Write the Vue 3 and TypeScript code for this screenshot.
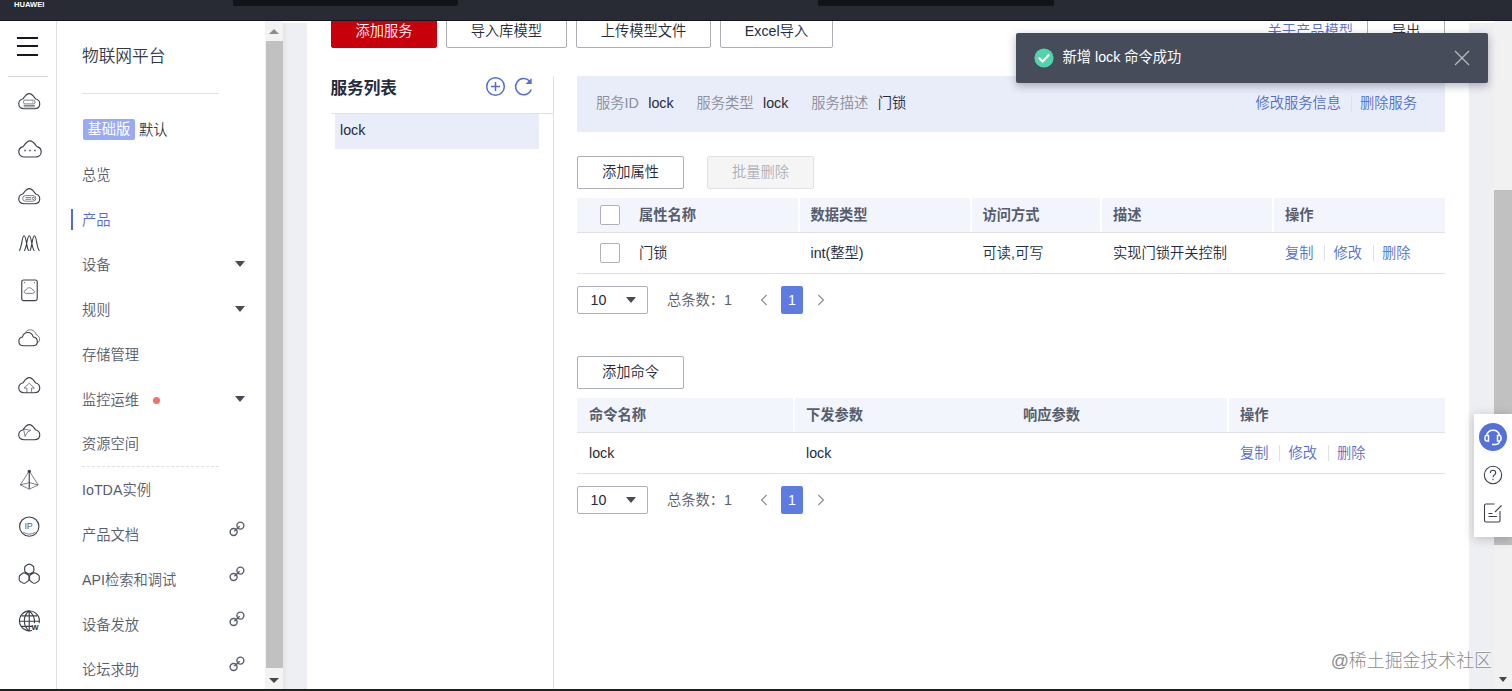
<script setup lang="ts">
interface MenuItem {
  label: string
  kind?: 'arrow' | 'link'
  active?: boolean
  dot?: boolean
}

const mainMenu: MenuItem[] = [
  { label: '总览' },
  { label: '产品', active: true },
  { label: '设备', kind: 'arrow' },
  { label: '规则', kind: 'arrow' },
  { label: '存储管理' },
  { label: '监控运维', kind: 'arrow', dot: true },
  { label: '资源空间' },
]
const extraMenu: MenuItem[] = [
  { label: 'IoTDA实例' },
  { label: '产品文档', kind: 'link' },
  { label: 'API检索和调试', kind: 'link' },
  { label: '设备发放', kind: 'link' },
  { label: '论坛求助', kind: 'link' },
]
const actions: string[] = ['复制', '修改', '删除']
const cloud = 'M6.500 20C3.200 20 .8 18 .8 15 .8 12.300 2.500 10.200 5 9.600 6.200 8.800 8.200 3.800 12 3.800s5.800 5 7 5.800C21.500 10.200 23.200 12.300 23.200 15 23.200 18 20.800 20 17.500 20Z'
</script>

<template>
  <div class="page">
    <header class="topbar">
      <span class="brand">HUAWEI</span>
      <i class="slot slot-a"></i>
      <i class="slot slot-b"></i>
    </header>

    <div class="body">
      <nav class="rail">
        <div class="burger"><i></i><i></i><i></i></div>
        <div class="rail-icons">
          <span><svg viewBox="0 0 24 24"><path :d="cloud" /><g class="thin"><rect x="6" y="10.800" width="12" height="4" rx="1.200" /><path d="M15 12.800h1.500M6 16.500h12M6 18h12" /></g></svg></span>
          <span><svg viewBox="0 0 24 24" class="big"><path :d="cloud" /><path class="dots" d="M6.300 13.500h1.400M11.300 13.500h1.400M16.300 13.500h1.400" /></svg></span>
          <span><svg viewBox="0 0 24 24"><path :d="cloud" /><g class="thin"><rect x="5" y="11.300" width="14" height="6" rx="3" /><path d="M8 13.400h6M8 15.300h6" /><circle cx="16.300" cy="14.300" r="1.200" /></g></svg></span>
          <span><svg viewBox="0 0 24 24"><path d="M1 20C4 19 4 4 6.500 4s2.500 14 5 16M6.500 20C9.500 18 9.500 4 12 4s2.500 14 5.500 16M12.500 20C15 18 15 4 17.500 4s2.500 15 5.500 16" /></svg></span>
          <span><svg viewBox="0 0 24 24"><rect x="4" y="1" width="16.500" height="22" rx="2" /><path class="thin" d="M9 15.300c-3.300 0-3-3.500-.4-3.500 1-3.300 6-3.300 7 0 2.600 0 2.900 3.500-.4 3.500Z" /><path d="M6.500 4h1M17 4h1" /></svg></span>
          <span><svg viewBox="0 0 24 24"><path d="M6 20c-6.500 0-6.500-8.500-1.300-9.300 1.800-6.500 9.800-6.500 11.600 0 5.800.8 5.800 9.300-.3 9.300Z" /><path class="thin" d="M8 5.500c3-4.500 10.500-2.500 11.500 2.800 4.500 1.700 4.700 6.700.9 9" /></svg></span>
          <span><svg viewBox="0 0 24 24"><path :d="cloud" /><path class="thin" d="M9.500 20v-5H6.500L12 9.800l5.500 5.200h-3v5" /></svg></span>
          <span><svg viewBox="0 0 24 24"><path :d="cloud" /><path class="thin" d="M6 8.500l7.500 1.500-3.500 2-2.500 4.500Z" /></svg></span>
          <span><svg viewBox="0 0 24 24"><path class="thin" d="M12 2L2.500 17l9.500 4.500 9.500-4.500ZM2.500 17l9.500-2.500 9.500 2.500" /><path d="M12 2v19" /><circle class="fill" cx="12" cy="2.500" r="1.200" /></svg></span>
          <span><svg viewBox="0 0 24 24"><circle cx="12" cy="11.300" r="10.300" /><text x="6.800" y="14.300" class="ip">IP</text><path class="thin" d="M5.500 17.300q6.500 4 13 0" /></svg></span>
          <span><svg viewBox="0 0 24 24"><path d="M10.500 1.600q1.500-.9 3 0l2.200 1.400q1.200.8 1.200 2.200v2.500q0 1.400-1.200 2.200L13.500 11.200q-1.500.9-3 0L8.300 9.900Q7.100 9.100 7.100 7.700V5.200Q7.100 3.800 8.300 3ZM5 11q1.500-.9 3 0l2.500 1.500q1.200.7 1.200 2v2.800q0 1.300-1.200 2L8 21.200q-1.500.9-3 0l-2.500-1.500q-1.200-.8-1.200-2.200V15q0-1.400 1.200-2.200ZM16 11q1.500-.9 3 0l2.500 1.600q1.200.8 1.200 2.200v2.600q0 1.400-1.200 2.200L19 21.200q-1.500.9-3 0l-2.500-1.800q-1.200-.7-1.200-2v-2.900q0-1.300 1.200-2Z" /></svg></span>
          <span><svg viewBox="0 0 24 24"><path d="M22.500 14A10.600 10.600 0 1 0 15 21.800" /><path d="M12 1v21.500M1.500 12h21M3.500 6.300h17M3.500 17.500h12M12 1c-7 5-7 16 0 21.500M12 1c5 4 6 8.500 5.500 13" /><text x="14.500" y="21.500" class="web">W</text></svg></span>
        </div>
      </nav>

      <aside class="sidebar">
        <h1 class="side-title">物联网平台</h1>
        <div class="edition"><b>基础版</b><span>默认</span></div>
        <ul class="menu">
          <li v-for="m in mainMenu" :key="m.label" :class="{ active: m.active }">
            {{ m.label }}<i v-if="m.dot" class="dot"></i>
            <i v-if="m.kind === 'arrow'" class="caret"></i>
          </li>
        </ul>
        <ul class="menu extra">
          <li v-for="m in extraMenu" :key="m.label">
            {{ m.label }}
            <svg v-if="m.kind === 'link'" class="chain" viewBox="0 0 16 16"><circle cx="4.600" cy="11" r="3.500" /><circle cx="11.400" cy="4.600" r="3.500" /><path d="M5.300 10.300l5.400-5" /></svg>
          </li>
        </ul>
      </aside>
      <div class="side-scroll"><i class="up"></i><i class="thumb"></i><i class="down"></i></div>

      <main class="main">
        <section class="card">
          <div class="toolbar">
            <button class="btn primary">添加服务</button>
            <button class="btn w-lib">导入库模型</button>
            <button class="btn w-file">上传模型文件</button>
            <button class="btn w-excel">Excel导入</button>
            <a class="about">关于产品模型</a>
            <button class="btn w-out">导出</button>
          </div>
          <div class="columns">
            <div class="services">
              <div class="services-head">
                <h2>服务列表</h2>
                <svg viewBox="0 0 20 20"><circle cx="10.500" cy="9.500" r="8.800" /><path d="M10.500 5v9M6 9.500h9" /></svg>
                <svg viewBox="0 0 20 20"><path d="M17.300 12.500A8.100 8.100 0 1 1 15.500 4" /><path class="tip" d="M17.600 1v6h-6Z" /></svg>
              </div>
              <div class="service">lock</div>
            </div>

            <div class="detail">
              <div class="banner">
                <span class="k">服务ID</span><span class="v">lock</span>
                <span class="k">服务类型</span><span class="v">lock</span>
                <span class="k">服务描述</span><span class="v">门锁</span>
                <div class="ops"><a>修改服务信息</a><a>删除服务</a></div>
              </div>

              <div class="buttons">
                <button class="btn">添加属性</button>
                <button class="btn disabled">批量删除</button>
              </div>
              <div class="table props">
                <div class="tr th">
                  <div class="check"><i></i>属性名称</div><div>数据类型</div><div>访问方式</div><div>描述</div><div>操作</div>
                </div>
                <div class="tr">
                  <div class="check"><i></i>门锁</div><div>int(整型)</div><div>可读,可写</div><div>实现门锁开关控制</div>
                  <div class="ops"><a v-for="a in actions" :key="a">{{ a }}</a></div>
                </div>
              </div>
              <div class="pager">
                <div class="select">10<i class="caret"></i></div>
                <span class="total">总条数：<em>1</em></span>
                <svg viewBox="0 0 8 12"><path d="M6.700 1L1.500 6l5.200 5" /></svg>
                <b>1</b>
                <svg viewBox="0 0 8 12"><path d="M1.300 1l5.200 5-5.200 5" /></svg>
              </div>

              <div class="buttons second"><button class="btn">添加命令</button></div>
              <div class="table cmds">
                <div class="tr th"><div>命令名称</div><div>下发参数</div><div class="plain">响应参数</div><div>操作</div></div>
                <div class="tr">
                  <div>lock</div><div>lock</div><div></div>
                  <div class="ops"><a v-for="a in actions" :key="a">{{ a }}</a></div>
                </div>
              </div>
              <div class="pager">
                <div class="select">10<i class="caret"></i></div>
                <span class="total">总条数：<em>1</em></span>
                <svg viewBox="0 0 8 12"><path d="M6.700 1L1.500 6l5.200 5" /></svg>
                <b>1</b>
                <svg viewBox="0 0 8 12"><path d="M1.300 1l5.200 5-5.200 5" /></svg>
              </div>
            </div>
          </div>
        </section>
        <div class="page-scroll"><i class="thumb"></i><i class="down"></i></div>
      </main>
    </div>
    <div class="baseline"></div>

    <div class="toast">
      <svg class="ok" viewBox="0 0 20 20"><circle cx="10" cy="10" r="9.600" /><path d="M4.800 9.800l3.800 3.700 6.600-7" /></svg>
      <span>新增 lock 命令成功</span>
      <svg class="close" viewBox="0 0 16 16"><path d="M1 1l14 14M15 1L1 15" /></svg>
    </div>

    <div class="helper">
      <svg class="headset" viewBox="0 0 28 28"><circle class="disc" cx="14" cy="14" r="14" /><path d="M7.500 12.500a6.800 7 0 0 1 13.200 0M7 12.500h2.500v5.500H7.800Q6 18 6 16v-1.500Q6 12.500 7 12.500ZM21 12.500h-2.500v5.500h1.700q1.800 0 1.800-2v-1.500q0-2-1-2ZM20.500 18q0 3-4 3.500h-3.500" /></svg>
      <svg class="line" viewBox="0 0 20 20"><circle cx="10" cy="10" r="8.700" /><path d="M7.300 8q0-2.800 2.700-2.800T12.700 8c0 1.800-2.700 2-2.700 4.200M10 13.800v1.400" /></svg>
      <svg class="line" viewBox="0 0 20 20"><path d="M11.500 1H3Q1.500 1 1.500 2.500v15Q1.500 19 3 19h12.500q1.500 0 1.500-1.500V8M18.500 2.500l-6.500 6.500M5.500 10.500h4M5.500 13.500h8.500" /></svg>
    </div>
    <div class="watermark">@稀土掘金技术社区</div>
  </div>
</template>

<style>
html, body { margin: 0; overflow: hidden; }
</style>

<style scoped>
* { box-sizing: border-box; }
.page {
  position: relative; width: 1512px; height: 691px; overflow: hidden; background: #fff;
  display: flex; flex-direction: column;
  font: 350 14.250px/20px "Liberation Sans", "Noto Sans CJK SC", sans-serif; color: #252b3a;
}
ul { list-style: none; margin: 0; padding: 0; }
svg { fill: none; stroke: #3c404b; flex: none; overflow: visible; }
a { color: #526ecc; }

.topbar { position: relative; height: 21px; background: #282b33; border-bottom: 1px solid #14161b; flex: none; }
.brand { position: absolute; left: 14px; top: -1px; font: 700 7.600px/11px "Liberation Sans", sans-serif; color: #fff; }
.slot { position: absolute; top: 0; height: 6px; background: #131417; border-radius: 0 0 2px 2px; }
.slot-a { left: 233px; width: 225px; }
.slot-b { left: 818px; width: 236px; }
.body { display: flex; height: 668px; }

.rail { width: 57px; border-right: 1px solid #dfe1e6; flex: none; }
.burger { margin: 0 8px; height: 56px; padding: 16px 0 0 9px; border-bottom: 1px solid #d5d6da; display: flex; flex-direction: column; gap: 6px; }
.burger i { width: 21px; height: 2px; margin-bottom: .4px; background: #181622; }
.rail-icons span { display: flex; align-items: center; justify-content: center; height: 47.270px; padding-left: 3px; }
.rail-icons svg { width: 22.500px; height: 22.500px; stroke-width: 1.200; }
.rail-icons { padding-top: 1px; }
.rail-icons svg.big { width: 24px; height: 24px; }
.rail-icons .thin { stroke-width: .7; }
.rail-icons .dots { stroke-width: 1.600; }
.fill { fill: #252b3a; }
.ip { font: 9.500px "Liberation Sans", sans-serif; fill: #565c74; stroke: none; }
.web { font: 700 8px "Liberation Sans", sans-serif; fill: #252b3a; stroke: none; }

.sidebar { width: 208px; padding-left: 25px; flex: none; color: #575d6c; }
.side-title { margin: 0; width: 137px; height: 73px; line-height: 71px; font-size: 16.700px; font-weight: 350; border-bottom: 1px solid #dfe1e6; color: #343946; }
.edition { display: flex; align-items: center; height: 58px; padding: 13px 0 0 1px; gap: 4px; color: #343946; }
.edition b { font-weight: 400; background: #97abf6; color: #fff; border-radius: 2px; width: 52px; height: 21px; line-height: 20px; text-align: center; }
.menu li { display: flex; align-items: center; height: 44.930px; position: relative; padding: 1px 20px 0 0; }
.menu li.active { color: #526ecc; }
.menu li.active::before { content: ""; position: absolute; left: -11px; top: 12px; width: 2px; height: 21px; background: #526ecc; }
.menu .caret, .chain { margin-left: auto; }
.extra { position: relative; padding-top: 1px; }
.extra li { padding-top: 0; }
.extra::before { content: ""; position: absolute; left: 0; top: 0; width: 137px; border-top: 1px dashed #dfe1e6; }
.dot { width: 7px; height: 7px; border-radius: 50%; background: #f66f6a; margin: 2px 0 0 14px; }
.caret { border: 5px solid transparent; border-top: 6px solid #464b55; border-bottom: 0; width: 0; height: 0; }
.menu .caret { margin-top: -1px; }
.chain { width: 16px; height: 16px; margin-top: -11px; stroke: #575d6c; stroke-width: 1.400; }

.side-scroll { width: 18px; background: #f3f3f4; flex: none; display: flex; flex-direction: column; align-items: center; }
.up { border: 5px solid transparent; border-bottom-color: #8d8d8d; border-top: 0; margin: 8px 0 7px; }
.side-scroll .thumb { width: 17px; height: 627px; background: #c1c1c1; }
.down { border: 5px solid transparent; border-top-color: #464646; border-bottom: 0; margin-top: 10px; }

.main { flex: 1; background: #eeeff2; padding-left: 24px; display: flex; box-shadow: inset 0 2px #fff, inset 4px 0 4px -2px #e2e3e6; }
.card { width: 1162px; background: #fff; overflow: hidden; padding: 0 24px; display: flex; flex-direction: column; flex: none; }
.toolbar { display: flex; gap: 9px; margin-top: -6px; height: 61px; }
.btn { font: inherit; width: 107px; height: 33px; padding: 0; border: 1px solid #abaeb5; border-radius: 2px; background: #fff; color: #252b3a; text-align: center; }
.toolbar .btn { line-height: 30px; padding-bottom: 1px; }
.toolbar .primary { width: 106px; background: #c7000b; border-color: #c7000b; color: #fff; }
.w-lib { width: 121px; }
.w-file { width: 135px; }
.w-excel { width: 113px; }
.about { margin: 6px 5px 0 auto; }
.w-out { width: 78px; }
.columns { display: flex; flex: 1; }
.services { width: 223px; border-right: 1px solid #e1e3e8; flex: none; }
.services-head { display: flex; height: 38px; align-items: center; border-bottom: 1px solid #dfe1e6; padding: 0 19px 14px 0; }
.services-head h2 { font-size: 16.600px; line-height: 20px; font-weight: 600; margin: 0 auto 0 -.5px; position: relative; top: 1px; }
.services-head svg { width: 20px; height: 20px; stroke: #526ecc; stroke-width: 1.500; margin-left: 9px; margin-top: -2px; }
.services-head .tip { fill: #526ecc; stroke: none; }
.service { width: 204px; height: 35px; margin-left: 4px; padding-left: 5px; line-height: 33px; background: #e9edfa; }

.detail { width: 868px; margin-left: 23px; }
.banner { height: 56px; background: #e9edfa; display: flex; align-items: center; padding: 0 28px 2px 19px; }
.k { color: #8a8e99; margin-right: 9.500px; }
.v { margin-right: 22.900px; }
.banner .ops { margin-left: auto; }
.ops { display: flex; align-items: center; }
.ops a + a { margin-left: 10px; padding-left: 9px; position: relative; }
.ops a + a::before { content: ""; position: absolute; left: 0; top: 2px; height: 16px; width: 1px; background: #dfe1e6; }
.buttons { display: flex; gap: 23px; margin: 24px 0 9px; }
.buttons.second { margin-top: 42px; }
.buttons .btn { padding-bottom: 1px; }
.disabled { background: #f5f5f6; border-color: #dfe1e6; color: #adb0b8; }

.tr { display: grid; align-items: center; height: 41px; border-bottom: 1px solid #dfe1e6; }
.props .tr { grid-template-columns: 221.500px 172px 130.500px 172px 172px; }
.cmds .tr { grid-template-columns: repeat(4, 217px); }
.tr > div { padding-left: 12px; }
.th { height: 35px; background: #f2f5fc; font-weight: 600; color: #575d6c; }
.th > div { height: 34px; line-height: 34px; border-left: 2px solid #fff; margin-left: -1px; padding-left: 11px; }
.th > div:first-child, .th > .plain { border-left-color: transparent; }
.tr > .check { display: flex; align-items: center; padding-left: 23px; }
.th > .check { padding-left: 22px; }
.check i { width: 20px; height: 20px; border: 1px solid #adb0b8; border-radius: 2px; background: #fff; margin-right: 19px; }
.tr .ops a + a { margin-left: 10.500px; padding-left: 9.500px; }
.tr:not(.th) > div { margin-top: -1px; }

.pager { display: flex; align-items: center; height: 28px; margin-top: 12px; }
.select { width: 71px; height: 28px; border: 1px solid #adb0b8; border-radius: 2px; display: flex; align-items: center; justify-content: space-between; padding: 0 11px 0 12.500px; }
.total { margin-left: 19px; color: #575d6c; width: 92.500px; display: flex; }
.total em { font-style: normal; }
.pager svg { width: 8px; height: 12px; stroke: #8a8e99; stroke-width: 1.200; }
.pager b { width: 22px; height: 28px; line-height: 28px; margin: 0 14px 0 13.500px; background: #5e7ce0; border-radius: 2px; color: #fff; text-align: center; font-weight: 400; }

.page-scroll { margin-left: auto; width: 18px; background: #f1f1f2; display: flex; flex-direction: column; align-items: center; padding-top: 169px; }
.page-scroll .thumb { width: 18px; height: 355px; background: #c1c1c1; }
.page-scroll .down { margin-top: 132px; border-width: 5px 4.500px 0; }
.baseline { height: 2px; background: #1f2022; position: relative; flex: none; }

.toast { position: absolute; left: 1016px; top: 33px; width: 472px; height: 50px; background: #464c59; border-radius: 2px; box-shadow: 0 3px 8px rgba(37, 43, 58, .35); display: flex; align-items: center; color: #fff; padding: 0 18px; }
.toast span { margin: -2px auto 0 8.500px; font-weight: 400; }
.ok { width: 20px; height: 20px; fill: #50d4ab; stroke: none; }
.ok path { fill: none; stroke: #fff; stroke-width: 2; }
.close { width: 16px; height: 16px; stroke: #b9bcc4; stroke-width: 1.200; }

.helper { position: absolute; left: 1474px; top: 414px; width: 38px; height: 123px; background: #fff; box-shadow: 0 2px 10px rgba(37, 43, 58, .25); display: flex; flex-direction: column; align-items: center; padding-top: 9px; }
.headset { width: 28px; height: 28px; stroke: #fff; stroke-width: 1.500; margin-bottom: 14px; }
.disc { fill: #5471d9; stroke: none; }
.line { width: 20px; height: 20px; stroke-width: 1.100; margin-bottom: 18px; }
.watermark { position: absolute; right: 20px; top: 648px; font-size: 17.900px; line-height: 26px; font-weight: 300; color: #8c8c8e; text-shadow: -1px -1px 0 rgba(255, 255, 255, .8); white-space: nowrap; }
</style>
